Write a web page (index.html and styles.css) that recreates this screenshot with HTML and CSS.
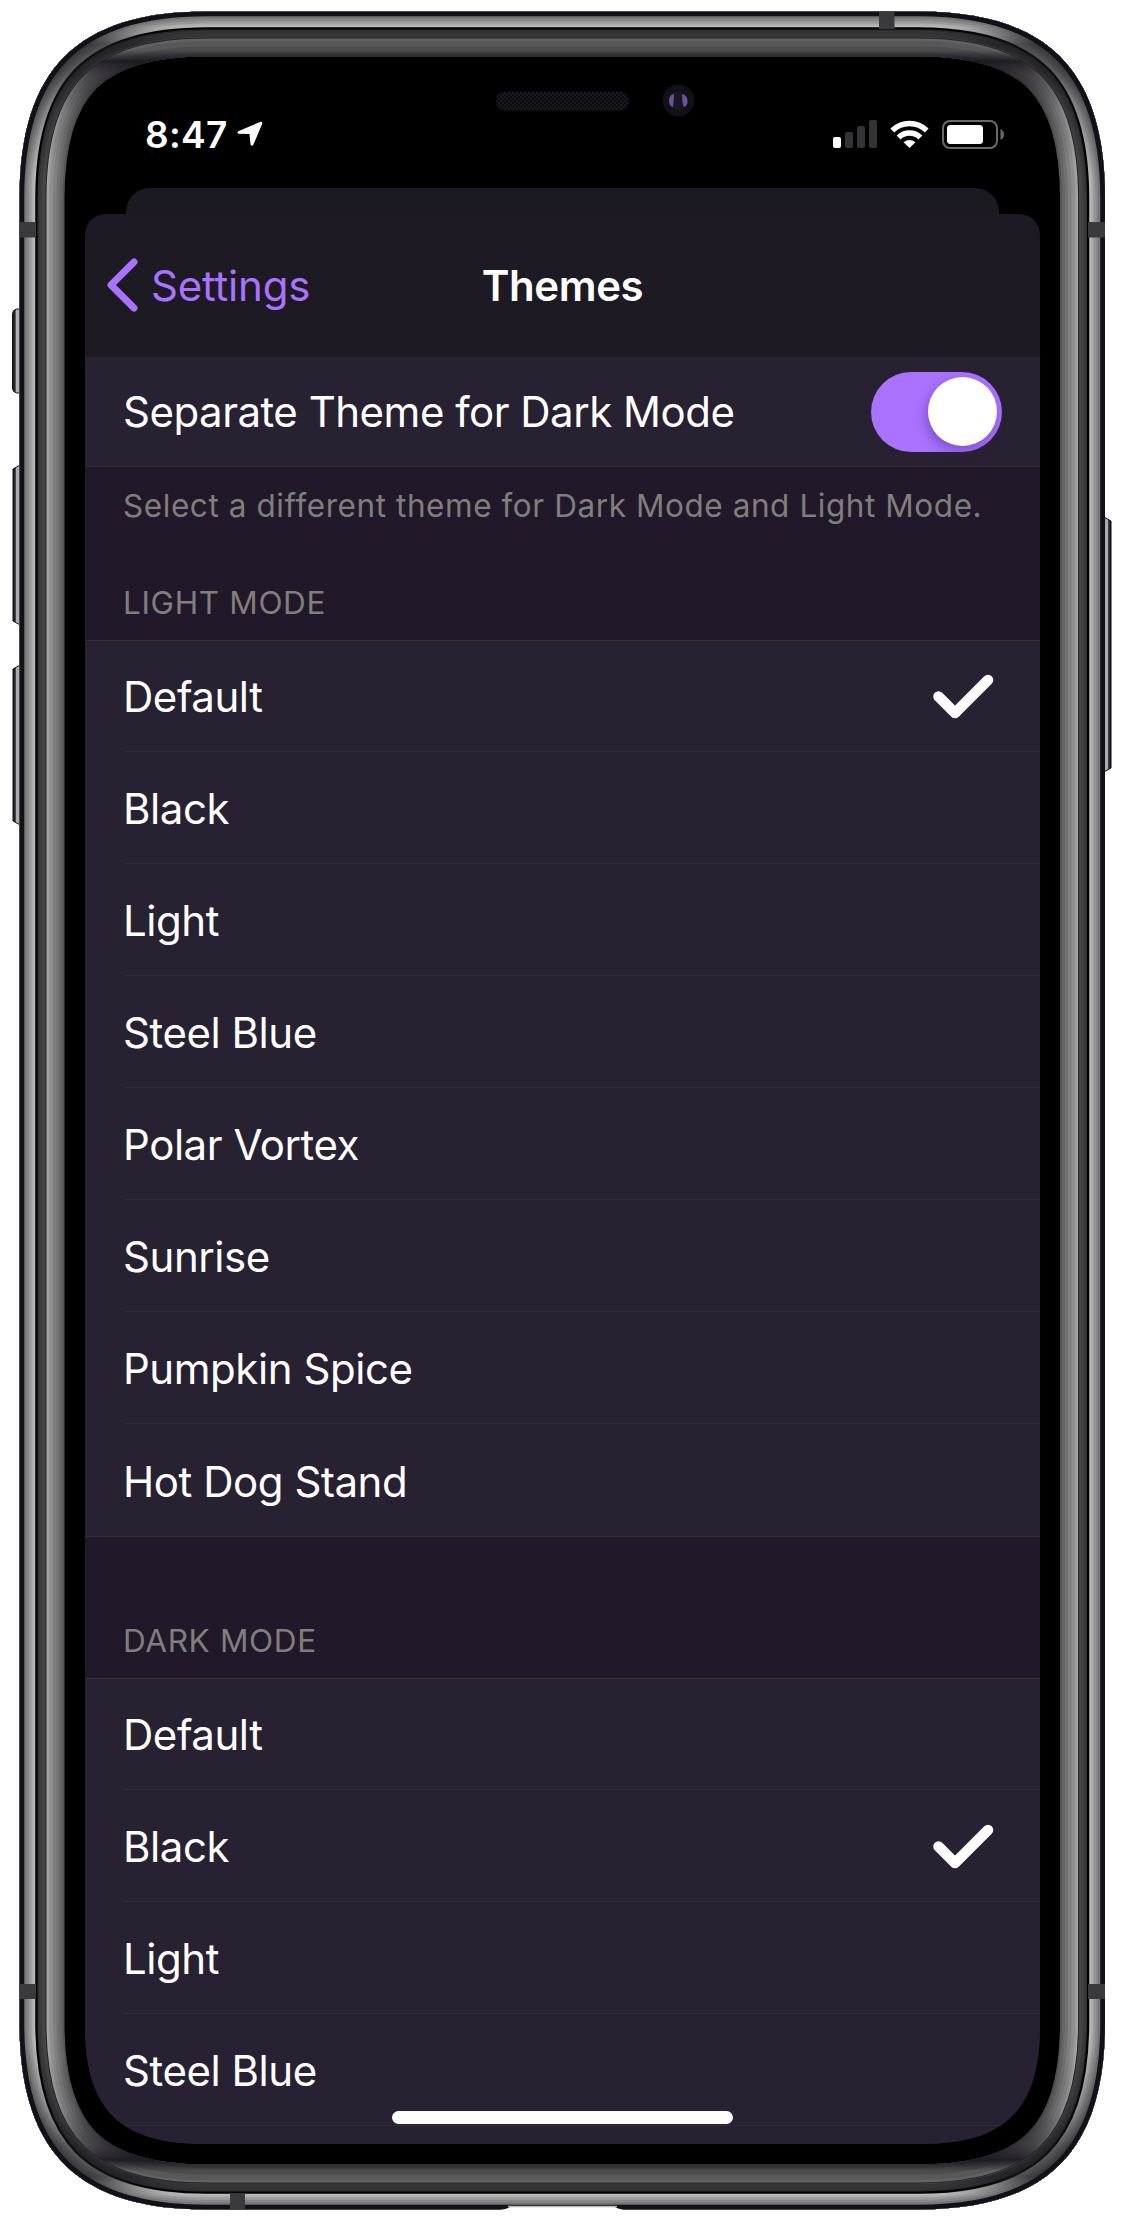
FILE: index.html
```html
<!DOCTYPE html>
<html lang="en">
<head>
<meta charset="utf-8">
<title>Themes</title>
<link rel="stylesheet" href="styles.css">
</head>
<body>
<main class="phone">
  <svg class="bezel" viewBox="0 0 1125 2221" aria-hidden="true">
    <defs>
      <path id="body" d="M206.5 11.5H918C1047 11.5 1105 69.500 1105 198.500V2022.500C1105 2151.500 1047 2209.500 918 2209.500H206.500C77.500 2209.500 19.500 2151.500 19.500 2022.500V198.500C19.500 69.500 77.500 11.500 206.500 11.500Z"/>
      <clipPath id="bodyClip"><use href="#body"/></clipPath>
      <linearGradient id="capFade" gradientUnits="userSpaceOnUse" x1="0" y1="0" x2="0" y2="2221">
        <stop offset="0" stop-color="#fff"/><stop offset=".0255" stop-color="#fff"/><stop offset=".029" stop-color="#000"/>
        <stop offset=".971" stop-color="#000"/><stop offset=".9745" stop-color="#fff"/><stop offset="1" stop-color="#fff"/>
      </linearGradient>
      <mask id="capMask" maskUnits="userSpaceOnUse" x="0" y="0" width="1125" height="2221"><rect width="1125" height="2221" fill="url(#capFade)"/></mask>
      <linearGradient id="shade" gradientUnits="userSpaceOnUse" x1="0" y1="0" x2="0" y2="2221">
        <stop offset=".012" stop-color="#19171f" stop-opacity="0"/><stop offset=".020" stop-color="#19171f" stop-opacity=".65"/>
        <stop offset=".032" stop-color="#19171f" stop-opacity=".6"/><stop offset=".05" stop-color="#19171f" stop-opacity=".3"/>
        <stop offset=".08" stop-color="#19171f" stop-opacity="0"/><stop offset=".92" stop-color="#19171f" stop-opacity="0"/>
        <stop offset=".95" stop-color="#19171f" stop-opacity=".3"/><stop offset=".968" stop-color="#19171f" stop-opacity=".6"/>
        <stop offset=".980" stop-color="#19171f" stop-opacity=".65"/><stop offset=".988" stop-color="#19171f" stop-opacity="0"/>
      </linearGradient>
      <linearGradient id="innerShade" gradientUnits="userSpaceOnUse" x1="0" y1="0" x2="0" y2="2221">
        <stop offset=".0225" stop-color="#16131c" stop-opacity="0"/><stop offset=".0275" stop-color="#16131c" stop-opacity=".9"/>
        <stop offset=".034" stop-color="#16131c" stop-opacity=".6"/><stop offset=".05" stop-color="#16131c" stop-opacity=".2"/>
        <stop offset=".075" stop-color="#16131c" stop-opacity="0"/><stop offset=".925" stop-color="#16131c" stop-opacity="0"/>
        <stop offset=".95" stop-color="#16131c" stop-opacity=".2"/><stop offset=".966" stop-color="#16131c" stop-opacity=".6"/>
        <stop offset=".9725" stop-color="#16131c" stop-opacity=".9"/><stop offset=".9775" stop-color="#16131c" stop-opacity="0"/>
      </linearGradient>
      <linearGradient id="key" x1="0" x2="1" y1="0" y2="0">
        <stop offset="0" stop-color="#15151b"/><stop offset=".25" stop-color="#2a2a30"/><stop offset=".4" stop-color="#b5b5b7"/><stop offset=".85" stop-color="#98989a"/><stop offset="1" stop-color="#29292d"/>
      </linearGradient>
      <pattern id="mesh" width="4" height="4" patternUnits="userSpaceOnUse"><rect width="4" height="4" fill="#0b0a0f"/><path d="M0 0h2v2h-2zM2 2h2v2h-2z" fill="#1b1a21"/></pattern>
    </defs>

    <g class="keys">
      <path d="M12.500 314q0-4 4-5h6v84h-6q-4-1-4-5z"/>
      <path d="M13 469l9-5v162l-9-5z"/>
      <path d="M13 669l9-5v162l-9-5z"/>
      <path transform="translate(1124 0) scale(-1 1)" d="M13 521l9-5v257l-9-5z"/>
    </g>

    <g clip-path="url(#bodyClip)">
      <use href="#body" fill="#000"/>
      <g class="ring">
        <use href="#body" stroke="#555" stroke-width="90"/>
        <use href="#body" stroke="#656565" stroke-width="86"/>
        <use href="#body" stroke="#727272" stroke-width="80"/>
        <use href="#body" stroke="#808080" stroke-width="74"/>
        <use href="#body" stroke="#8e8e8e" stroke-width="67"/>
        <use href="#body" stroke="#9e9e9e" stroke-width="60"/>
        <use href="#body" stroke="#aaa" stroke-width="56"/>
        <g mask="url(#capMask)">
          <use href="#body" stroke="#454545" stroke-width="90"/>
          <use href="#body" stroke="#4d4d4d" stroke-width="82"/>
          <use href="#body" stroke="#585858" stroke-width="70"/>
          <use href="#body" stroke="#626262" stroke-width="59"/>
        </g>
        <use href="#body" stroke="url(#innerShade)" stroke-width="90"/>
        <use href="#body" stroke="#242328" stroke-width="54"/>
        <use href="#body" stroke="#454545" stroke-width="52"/>
        <use href="#body" stroke="#3b3b3b" stroke-width="45"/>
        <use href="#body" stroke="#303030" stroke-width="39"/>
        <use href="#body" stroke="#000" stroke-width="36"/>
        <use href="#body" stroke="#bababa" stroke-width="31.500"/>
        <use href="#body" stroke="#adadad" stroke-width="28"/>
        <use href="#body" stroke="#999" stroke-width="24"/>
        <use href="#body" stroke="#878787" stroke-width="19"/>
        <use href="#body" stroke="#757575" stroke-width="14"/>
        <use href="#body" stroke="url(#shade)" stroke-width="51"/>
        <use href="#body" stroke="#121117" stroke-width="9.500"/>
      </g>
      <g fill="#3a393c">
        <path d="M19 222h17v15.500H19zM1088 222h17v15.500h-17zM19 1984h17v15h-17zM1088 1984h17v15h-17zM879 11h15.500v18H879zM230 2193h15v17h-15z"/>
      </g>
    </g>
    <path d="M497 2210.500q9-1 14-4h103q5 3 14 4z" fill="#fff"/>
    <path d="M508 2206.500h109" stroke="#b5b5b5" stroke-width="1.500"/>

    <rect x="496" y="91.500" width="133" height="19" rx="9.500" fill="url(#mesh)"/>
    <circle cx="678.500" cy="100.500" r="16" fill="#121116"/>
    <circle cx="678" cy="100.500" r="9.500" fill="#1a1722"/>
    <path d="M674 94q-5 1-5 6.500t4 6.500q1-6 1-13zM682 94q5 1 5.500 6.500t-4 6.500q-1.500-6-1.500-13z" fill="#6d519f"/>
  </svg>

  <header class="status">
    <div class="status-time">
      <time>8:47</time>
      <svg width="26" height="26" viewBox="0 0 26 26"><path d="M23.500.8 1.200 10.300Q-.3 12.200 1.800 12.800L12.500 13 13.500 23.500Q14.500 25.900 16.300 23.800L25.300 2.500Q25.600.4 23.500.8Z" fill="#fff"/></svg>
    </div>
    <div class="status-icons">
      <svg width="44" height="28" viewBox="0 0 44 28"><rect y="17" width="8" height="11" rx="2" fill="#fff"/><path d="M14 12h4q2 0 2 2v12q0 2-2 2h-4q-2 0-2-2V14q0-2 2-2zM26 6h4q2 0 2 2v18q0 2-2 2h-4q-2 0-2-2V8q0-2 2-2zM38 0h4q2 0 2 2v24q0 2-2 2h-4q-2 0-2-2V2q0-2 2-2z" fill="#333235"/></svg>
      <svg width="39" height="28" viewBox="0 0 39 28"><g fill="none" stroke="#fff" stroke-width="5.500"><path d="M2.300 10.500a24.500 24.500 0 0 1 34.400 0"/><path d="M8.600 17.500a15.500 15.500 0 0 1 21.800 0"/></g><path d="M13.500 22.300q6-4.500 12 0L19.500 28z" fill="#fff"/></svg>
      <svg width="63" height="29" viewBox="0 0 63 29"><rect x="1" y="1" width="54" height="27" rx="7" fill="none" stroke="#69686b" stroke-width="2"/><rect x="5" y="5" width="36" height="19" rx="3.500" fill="#fff"/><path d="M58.500 9q3.500 2 3.500 5.500t-3.500 5.500z" fill="#69686b"/></svg>
    </div>
  </header>

  <div class="sheet-behind"></div>

  <section class="sheet">
    <nav class="nav">
      <a class="nav-back"><svg width="32" height="54" viewBox="0 0 32 54"><path d="M27 4 4 27l23 23" fill="none" stroke="#a972ff" stroke-width="7" stroke-linecap="round" stroke-linejoin="round"/></svg><span>Settings</span></a>
      <h1 class="nav-title">Themes</h1>
    </nav>

    <div class="row row-switch">
      <span>Separate Theme for Dark Mode</span>
      <span class="switch"><span class="knob"></span></span>
    </div>
    <p class="note">Select a different theme for Dark Mode and Light Mode.</p>

    <h2 class="group-title">LIGHT MODE</h2>
    <ul class="list">
      <li class="row"><span>Default</span><svg class="check" width="62" height="46" viewBox="0 0 62 46"><path d="M6.500 23.500 23 40 56 7"/></svg></li>
      <li class="row"><span>Black</span></li>
      <li class="row"><span>Light</span></li>
      <li class="row"><span>Steel Blue</span></li>
      <li class="row"><span>Polar Vortex</span></li>
      <li class="row"><span>Sunrise</span></li>
      <li class="row"><span>Pumpkin Spice</span></li>
      <li class="row"><span>Hot Dog Stand</span></li>
    </ul>

    <h2 class="group-title group-title-dark">DARK MODE</h2>
    <ul class="list">
      <li class="row"><span>Default</span></li>
      <li class="row"><span>Black</span><svg class="check" width="62" height="46" viewBox="0 0 62 46"><path d="M6.500 23.500 23 40 56 7"/></svg></li>
      <li class="row"><span>Light</span></li>
      <li class="row"><span>Steel Blue</span></li>
      <li class="row"></li>
    </ul>
    <div class="home-bar"></div>
  </section>
</main>
</body>
</html>
```
FILE: styles.css
```css
* { box-sizing: border-box; }

body {
  margin: 0;
  background: #fff;
  color: #fff;
  font-family: Inter, "Liberation Sans", sans-serif;
}

.phone {
  position: relative;
  width: 1125px;
  height: 2221px;
  padding: 0 85px;
  overflow: hidden;
  display: flex;
  flex-direction: column;
}

.bezel {
  position: absolute;
  inset: 0;
  width: 1125px;
  height: 2221px;
}

.keys { fill: url(#key); stroke: #111116; stroke-width: 1; }
.ring { fill: none; }

.status {
  position: relative;
  height: 188px;
  padding: 107px 35px 0 60px;
  display: flex;
  justify-content: space-between;
  align-items: flex-start;
}

.status-time {
  height: 54px;
  display: flex;
  align-items: center;
  gap: 9px;
  font-size: 37px;
  font-weight: 600;
  letter-spacing: 0.3px;
}

.status-icons {
  height: 54px;
  display: flex;
  align-items: center;
  gap: 13px;
}

.sheet-behind {
  position: relative;
  height: 26px;
  margin: 0 41px;
  border-radius: 24px 24px 0 0;
  background: #1c1a21;
}

.sheet {
  position: relative;
  height: 1930px;
  background: #211829;
  clip-path: path("M24 0H931Q955 0 955 24V1812C955 1895 920 1930 837 1930H118C35 1930 0 1895 0 1812V24Q0 0 24 0Z");
}

.nav {
  height: 143px;
  display: grid;
  grid-template-columns: 1fr auto 1fr;
  align-items: center;
  padding: 0 22px 1px 22px;
  background: #1d1a23;
}

.nav-back {
  display: flex;
  align-items: center;
  gap: 12px;
  color: #a972ff;
  font-size: 42px;
  letter-spacing: -0.2px;
}

.nav-title {
  margin: 0;
  font-size: 42px;
  font-weight: 600;
  letter-spacing: -0.4px;
}

.row {
  height: 112px;
  display: flex;
  align-items: center;
  justify-content: space-between;
  padding: 0 38px;
  font-size: 42px;
  letter-spacing: -0.45px;
}

.row-switch {
  height: 110px;
  background: #282132;
  border-bottom: 1px solid #35302f;
  letter-spacing: -0.5px;
}

.switch {
  width: 131px;
  height: 80px;
  padding: 5px;
  border-radius: 40px;
  background: #a972ff;
  display: flex;
  justify-content: flex-end;
}

.knob {
  width: 69px;
  height: 69px;
  border-radius: 50%;
  background: #fff;
  box-shadow: -2px 5px 12px rgba(60, 30, 120, .4);
}

.note {
  height: 80px;
  margin: 0;
  padding: 0 38px;
  line-height: 78px;
  font-size: 31.500px;
  letter-spacing: 0.57px;
  color: #807f7c;
  white-space: nowrap;
}

.group-title {
  height: 93px;
  margin: 0;
  padding: 37px 38px 0;
  line-height: 37px;
  font-size: 31.500px;
  font-weight: 400;
  letter-spacing: 0.65px;
  color: #807f7c;
}

.group-title-dark { height: 141px; padding-top: 85px; }

.list {
  list-style: none;
  margin: 0;
  padding: 0;
  background: #282132;
  border-top: 1px solid #35302f;
  border-bottom: 1px solid #35302f;
}

.list .row {
  margin-left: 38px;
  padding-left: 0;
  padding-top: 2px;
  border-bottom: 1px solid #322c35;
}

.list .row:first-child { height: 111px; padding-top: 1px; }
.list .row:last-child { border-bottom: 0; }

.check {
  margin: -2px 8px 0 0;
  fill: none;
  stroke: #fff;
  stroke-width: 10.500;
  stroke-linecap: round;
  stroke-linejoin: round;
}

.home-bar {
  position: absolute;
  left: 307px;
  top: 1897px;
  width: 341px;
  height: 13px;
  border-radius: 7px;
  background: #fff;
}
```
